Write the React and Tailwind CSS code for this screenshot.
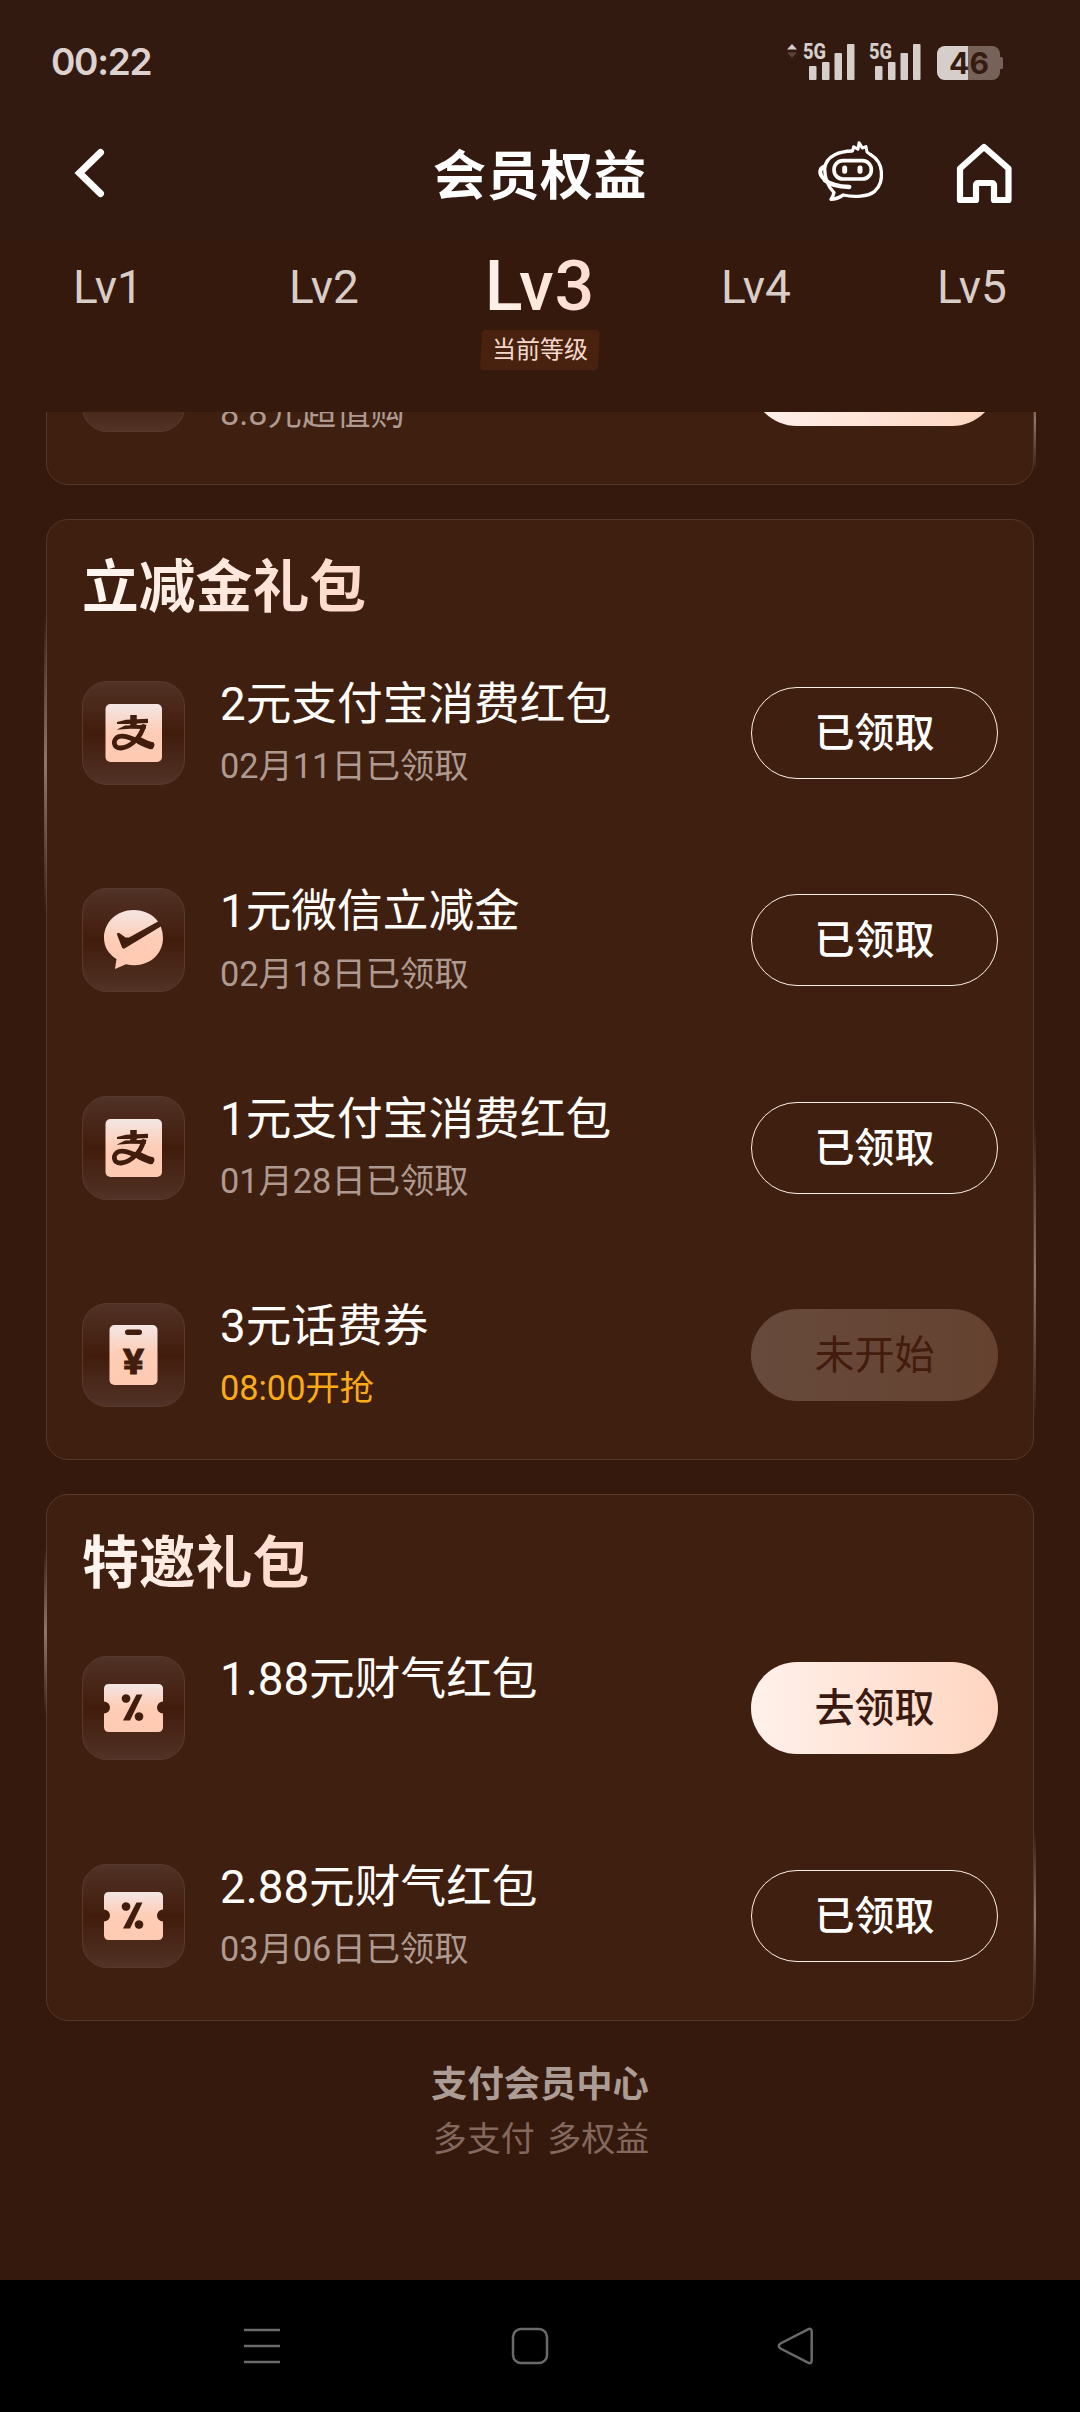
import clsx from 'clsx';

const levels = ['Lv1', 'Lv2', 'Lv3', 'Lv4', 'Lv5'];
const currentLevel = 'Lv3';

const sections = [
  {
    title: '',
    items: [{ icon: 'none', name: '', note: '8.8元超值购', status: 'open', label: '' }],
  },
  {
    title: '立减金礼包',
    items: [
      { icon: 'alipay', name: '2元支付宝消费红包', note: '02月11日已领取', status: 'done' },
      { icon: 'wechat', name: '1元微信立减金', note: '02月18日已领取', status: 'done' },
      { icon: 'alipay', name: '1元支付宝消费红包', note: '01月28日已领取', status: 'done' },
      { icon: 'phone', name: '3元话费券', note: '08:00开抢', status: 'pending' },
    ],
  },
  {
    title: '特邀礼包',
    items: [
      { icon: 'ticket', name: '1.88元财气红包', note: '', status: 'open' },
      { icon: 'ticket', name: '2.88元财气红包', note: '03月06日已领取', status: 'done' },
    ],
  },
];

const Signal = () => (
  <svg width="52" height="40" viewBox="0 0 52 40" fill="#d6cecb">
    <text x="0" y="19" fontSize="22" fontWeight="800" fontFamily="Roboto" textLength="23" lengthAdjust="spacingAndGlyphs">
      5G
    </text>
    <rect x="6" y="26" width="7.500" height="14" rx="1" />
    <rect x="19" y="22" width="7.500" height="18" rx="1" />
    <rect x="31.500" y="13" width="7.500" height="27" rx="1" />
    <rect x="44" y="4" width="7.500" height="36" rx="1" />
  </svg>
);

const StatusBar = () => (
  <div className="flex h-[124px] items-start justify-between pl-[51px] pr-[76px] pt-10">
    <span className="font-[Inter] text-[37px] leading-[44px] font-semibold tracking-[-1.300px] text-[#ddd2cf]">00:22</span>
    <div className="flex items-start">
      <svg width="12" height="40" viewBox="0 0 12 40" className="mr-[5px]">
        <path d="M1 9.500 6 4l5 5.500z" fill="#d6cecb" />
        <path d="M1 12.500 6 18l5-5.500z" fill="#5b4238" />
      </svg>
      <Signal />
      <div className="w-3.5" />
      <Signal />
      <svg width="68" height="40" viewBox="0 0 68 40" className="ml-[15px]">
        <rect x="1" y="6" width="63" height="34" rx="8" fill="#776259" />
        <path d="M64 17h1.500q1.500 0 1.500 1.500v9q0 1.500-1.500 1.500H64z" fill="#776259" />
        <path d="M9 6h23v34H9a8 8 0 0 1-8-8V14a8 8 0 0 1 8-8z" fill="#d6cecb" />
        <text x="33" y="34" textAnchor="middle" fontSize="30" fontWeight="700" fontFamily="Inter" fill="#351b10">
          46
        </text>
      </svg>
    </div>
  </div>
);

const RobotIcon = () => (
  <svg width="80" height="80" viewBox="0 0 240 240" fill="none" stroke="#fff" strokeWidth="10" strokeLinecap="round" strokeLinejoin="round">
    <path d="M120 51C88 52 42 62 38 104C38 134 48 157 66 176C64 184 62 189 57 196C70 196 80 192 94 183C126 191 168 188 188 172C206 156 210 132 208 112C206 92 196 74 176 62" />
    <path d="M122 50 125 38 138 46 141 26 151 42 162 38 165 54 176 62" strokeWidth="9" />
    <path d="M36 98C22 104 20 122 36 134" strokeWidth="12" />
    <path d="M38 138C54 152 78 158 112 159" strokeWidth="13" />
    <rect x="66" y="80" width="112" height="55" rx="27" strokeWidth="11" />
    <path d="M98 102v10M144 102v10" strokeWidth="15" />
  </svg>
);

const HomeIcon = () => (
  <svg width="60" height="66" viewBox="0 0 60 66" fill="none" stroke="#fff" strokeWidth="6.200" strokeLinejoin="round">
    <path d="M30 7 54.500 28.500V60H40V45.500q0-2.500-2.500-2.500H24.500q-2.500 0-2.500 2.500V60H6V28.500Z" />
  </svg>
);

const NavBar = () => (
  <div className="grid h-[116px] grid-cols-[1fr_auto_1fr] pt-2.5">
    <svg width="40" height="60" viewBox="0 0 40 60" className="ml-[69px] mt-[9px]" fill="none" stroke="#fff" strokeWidth="7">
      <path d="M31.500 9.500 10.500 30 31.500 50.500" strokeLinecap="round" />
    </svg>
    <h1 className="pt-[15px] text-[53px] leading-[56px] font-bold tracking-[0.500px] text-white">会员权益</h1>
    <div className="flex justify-end pr-[66px]">
      <RobotIcon />
      <div className="ml-[62px] mt-1.5">
        <HomeIcon />
      </div>
    </div>
  </div>
);

const LevelTabs = () => (
  <div className="grid h-[172px] grid-cols-5">
    {levels.map((level) =>
      level === currentLevel ? (
        <div key={level} className="flex flex-col items-center">
          <span className="mt-1.5 bg-linear-to-r from-[#fff3ec] to-[#ffdccd] bg-clip-text text-[70px] leading-[80px] font-medium tracking-[0.800px] text-transparent">
            {level}
          </span>
          <span className="relative mt-1 flex h-10 w-[120px] items-center justify-center text-[24px] leading-[36px] text-[#f3d8cc]">
            <span className="absolute inset-x-px inset-y-0 -skew-x-3 rounded-[4px] bg-[#48210f]" />
            <span className="relative">当前等级</span>
          </span>
        </div>
      ) : (
        <span key={level} className="pt-5 text-center text-[46px] leading-[54px] text-[#d9cdc8]">
          {level}
        </span>
      ),
    )}
  </div>
);

const glyphs = {
  none: null,
  alipay: (
    <>
      <rect x="23.500" y="23" width="56.500" height="58" rx="5" fill="url(#peach)" />
      <g fill="none" stroke="#421d0e" strokeLinejoin="round">
        <path d="M51.500 34v11" strokeWidth="6.500" />
        <path d="M61.500 45.500C59 55 50 66 39 67C31 67.500 30 58 37 55.500C46 53 54 62 70 63.500" strokeWidth="4.800" strokeLinecap="round" />
        <path d="M58 60C62 62 65 63.500 68.500 64.500" strokeWidth="7.500" strokeLinecap="round" />
      </g>
      <path d="M35 41 44 38.700 66 37.800v4.200L46 43 35 43zM34.500 48.700 43 44.600 64.500 43.800 63.500 48 48 47.800z" fill="#421d0e" />
    </>
  ),
  wechat: (
    <path
      d="M51.500 22C35 22 22 34 22 50C22 59 27 66.500 34.500 71L33 81 44 76.200C64 81 81 68 81 50Q81 44 78.800 38.500L42.500 60.500Q41 61 40 59.500L35 46.500Q35 43.500 38 45.500L43.500 49.500 47 49.500 76 33.500C70.500 26 61.500 22 51.500 22Z"
      fill="url(#peach)"
    />
  ),
  phone: (
    <>
      <rect x="27.500" y="22" width="48" height="60" rx="5" fill="url(#peach)" />
      <rect x="43" y="26.500" width="17" height="5.500" rx="2.750" fill="#421d0e" />
      <text
        x="41"
        y="70.500"
        fontSize="35"
        fontWeight="700"
        fontFamily="Roboto"
        textLength="21"
        lengthAdjust="spacingAndGlyphs"
        fill="#421d0e"
        stroke="#421d0e"
        strokeWidth="1"
      >
        ¥
      </text>
    </>
  ),
  ticket: (
    <>
      <path
        d="M27 28H76q5 0 5 5V45.500a6 6 0 0 0 0 12V71q0 5-5 5H27q-5 0-5-5V57.500a6 6 0 0 0 0-12V33q0-5 5-5Z"
        fill="url(#peach)"
      />
      <path d="M54.500 38.500H60.500L48 64.500H41ZM44 38.200a4.300 4.300 0 1 0 .01 0ZM57 56.200a4.300 4.300 0 1 0 .01 0Z" fill="#421d0e" />
    </>
  ),
};

const ItemIcon = ({ name }) => (
  <div className="h-[104px] w-[103px] shrink-0 rounded-[25px] border border-[#583a2d] bg-linear-to-b from-[#513226] via-[#411c0c] to-[#513226]">
    <svg width="103" height="104" viewBox="0 0 103 104" className="-m-px">
      <defs>
        <linearGradient id="peach" x1="0" y1="0" x2="0" y2="1">
          <stop offset="0" stopColor="#f3e6e4" />
          <stop offset="0.5" stopColor="#ffccb5" />
          <stop offset="1" stopColor="#ffcab2" />
        </linearGradient>
      </defs>
      {glyphs[name]}
    </svg>
  </div>
);

const buttons = {
  open: { label: '去领取', style: 'bg-linear-to-r from-[#fff1eb] to-[#ffd5c0] font-medium text-[#3a1a10]' },
  done: { label: '已领取', style: 'border border-[#ffeee4] font-medium text-white' },
  pending: { label: '未开始', style: 'bg-linear-to-r from-[#674a3c] to-[#654230] text-[#421c0d]' },
};

const ClaimButton = ({ status, label = buttons[status].label }) => (
  <button className={clsx('mt-1.5 h-[92px] w-[247px] shrink-0 rounded-full pt-0.5 text-[40px] leading-none', buttons[status].style)}>
    {label}
  </button>
);

const GiftItem = ({ icon, name, note, status, label }) => (
  <li className="flex h-[104px] items-start">
    <ItemIcon name={icon} />
    <div className="ml-[35px] flex-1">
      <p className="-mt-1.5 h-[60px] text-[45.700px] leading-[60px] text-[#fffdfa]">{name}</p>
      <p className={clsx('mt-[9.500px] text-[34.300px] leading-[44px]', status === 'pending' ? 'text-[#fbab18]' : 'text-[#ae9a91]')}>
        {note}
      </p>
    </div>
    <ClaimButton status={status} label={label} />
  </li>
);

const GiftCard = ({ title, items }) => (
  <section className="relative rounded-[22px] border border-[#573728] bg-[#3f1f10] px-[35px] pt-[35.500px] pb-[52px]">
    {/* edge glow */}
    <span className="absolute top-[10%] -left-[3px] h-[32%] w-[2.500px] bg-linear-to-b from-transparent via-[#8d766b] to-transparent" />
    <span className="absolute -right-[3px] bottom-[4%] h-[32%] w-[2.500px] bg-linear-to-b from-transparent via-[#8d766b] to-transparent" />
    <h2 className="h-[66px] w-fit bg-linear-to-r from-[#fff6f1] to-[#ffd9ca] bg-clip-text text-[56.800px] leading-[66px] font-bold text-transparent">
      {title}
    </h2>
    <ul className="mt-[59.500px] flex flex-col gap-[103.400px]">
      {items.map((item) => (
        <GiftItem key={item.note + item.name} {...item} />
      ))}
    </ul>
  </section>
);

const SystemNav = () => (
  <div className="flex h-[132px] items-center justify-between bg-black pl-[242px] pr-[265px]">
    <svg width="40" height="40" viewBox="0 0 40 40" stroke="#6a6a6a" strokeWidth="2.500">
      <path d="M2 4h36M2 20h36M2 36h36" />
    </svg>
    <svg width="40" height="40" viewBox="0 0 40 40" fill="none" stroke="#6a6a6a" strokeWidth="2.500">
      <rect x="4" y="3" width="34" height="34" rx="8" />
    </svg>
    <svg width="40" height="40" viewBox="0 0 40 40" fill="none" stroke="#6a6a6a" strokeWidth="2.500">
      <path d="M33 3.300Q36.500 1.500 36.700 5.500V34.500Q36.500 38.500 33 36.700L5.500 22.500Q2 20 5.500 17.500Z" />
    </svg>
  </div>
);

const App = () => {
  return (
    <div className="flex h-[2412px] w-full flex-col overflow-hidden bg-[#36190d] font-[Roboto,'Noto_Sans_CJK_SC',sans-serif]">
      <header className="shrink-0">
        <div className="bg-[#331a10]">
          <StatusBar />
          <NavBar />
        </div>
        <LevelTabs />
      </header>

      <main className="min-h-0 flex-1 overflow-hidden">
        {/* list is scrolled so the first card is cut by the header */}
        <div className="-mt-[246.500px] flex flex-col gap-[34.300px] px-[46px]">
          {sections.map((section, i) => (
            <GiftCard key={i} {...section} />
          ))}
        </div>
        <footer className="pt-[38px] text-center">
          <p className="text-[36.300px] leading-[52px] font-bold text-[#ab9c96]">支付会员中心</p>
          <p className="mt-0.5 pl-0.5 text-[34px] leading-[52px] [word-spacing:4px] text-[#83685d]">多支付 多权益</p>
        </footer>
      </main>

      <SystemNav />
    </div>
  );
};

export default App;
